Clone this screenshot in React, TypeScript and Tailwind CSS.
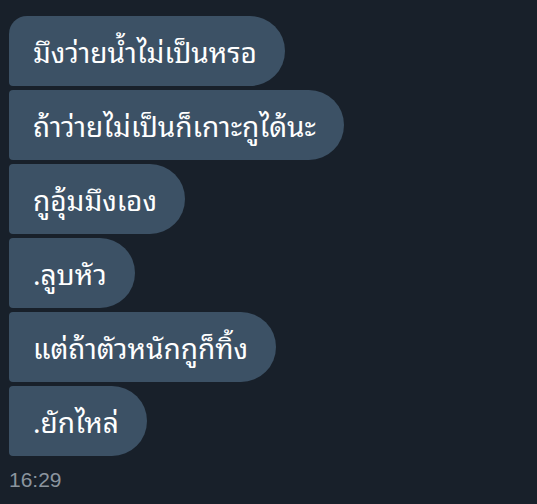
const messages = [
  "มึงว่ายน้ำไม่เป็นหรอ",
  "ถ้าว่ายไม่เป็นก็เกาะกูได้นะ",
  "กูอุ้มมึงเอง",
  ".ลูบหัว",
  "แต่ถ้าตัวหนักกูก็ทิ้ง",
  ".ยักไหล่",
];

const App = () => {
  return (
    <div className="h-[504px] w-[537px] overflow-hidden bg-[#18202a] pl-[9px] pt-4 font-['Noto_Sans_Thai_Looped','Loma','Liberation_Sans',sans-serif]">
      <div className="flex flex-col items-start gap-1">
        {messages.map((text, i) => (
          <div
            key={i}
            className={`flex h-[70px] items-center rounded-l-[4px] rounded-r-[35px] bg-[#3c5165] pl-6 pr-7 text-[28px] leading-none text-white ${
              i === 0 ? "rounded-tl-[18px]" : ""
            }`}
          >
            {text}
          </div>
        ))}
      </div>
      <div className="mt-3 font-['Liberation_Sans',sans-serif] text-[21px] leading-6 text-[#8b949e]">
        16:29
      </div>
    </div>
  );
};

export default App;
